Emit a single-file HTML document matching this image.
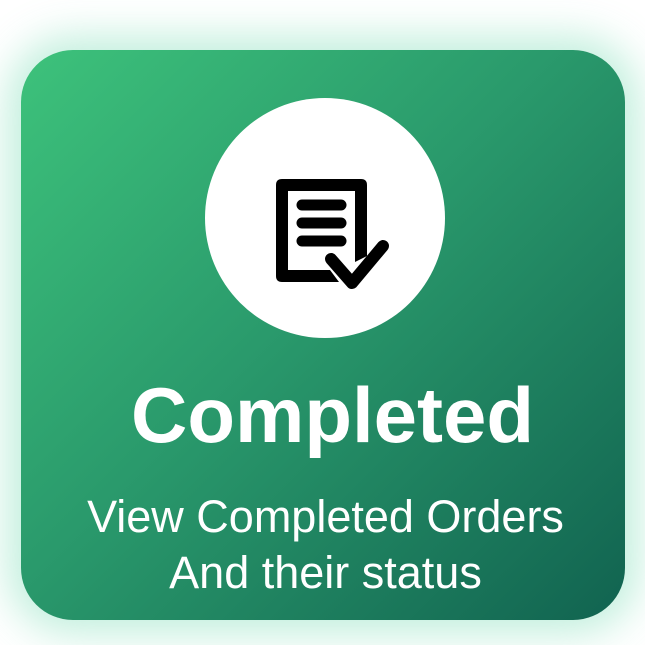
<!DOCTYPE html>
<html><head><meta charset="utf-8"><style>
html,body{margin:0;padding:0;width:645px;height:645px;overflow:hidden;background:#fff;font-family:"Liberation Sans",sans-serif;}
.glow{position:absolute;left:21px;top:50px;width:604px;height:570px;border-radius:52px;box-shadow:0 0 40px 14px rgba(120,220,180,0.45);}
.card{position:absolute;left:21px;top:50px;width:604px;height:570px;border-radius:52px;background:linear-gradient(135deg,#3dc27b 0%,#2a9a6c 45%,#116350 100%);overflow:hidden;}
.circle{position:absolute;left:205px;top:98px;width:240px;height:240px;border-radius:50%;background:#fff;}
.t{position:absolute;left:0;width:645px;text-align:center;color:#fff;white-space:nowrap;}
</style></head><body>
<div class="glow"></div>
<div class="card"></div>
<div class="circle"></div>
<svg style="position:absolute;left:0;top:0" width="645" height="645">
<path d="M276 185 Q276 179 282 179 H361 Q367 179 367 185 V256 L355 262 V191 H288 V270 H330 L339 282 H282 Q276 282 276 276 Z" fill="#000"/>
<g stroke="#000" stroke-width="11" stroke-linecap="round"><line x1="302" y1="205" x2="341" y2="205"/><line x1="302" y1="223" x2="341" y2="223"/><line x1="302" y1="241" x2="341" y2="241"/></g>
<path d="M331 259 L352 283 L383 246" fill="none" stroke="#000" stroke-width="12" stroke-linejoin="round" stroke-linecap="round"/>
</svg>
<div class="t" style="left:10px;top:369px;font-size:78px;font-weight:bold;line-height:92px;">Completed</div>
<div class="t" style="left:3px;top:489px;font-size:45px;line-height:56px;">View Completed Orders<br>And their status</div>
</body></html>
